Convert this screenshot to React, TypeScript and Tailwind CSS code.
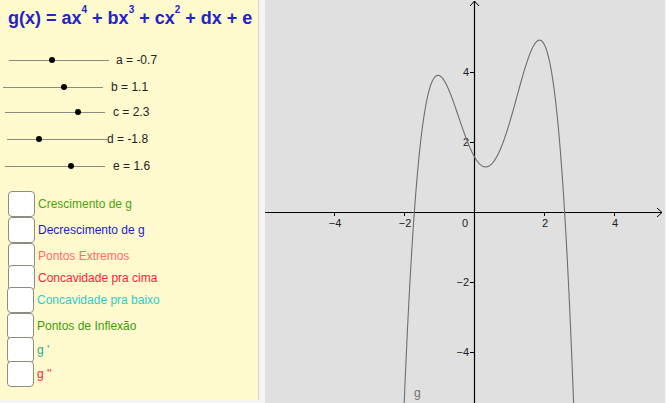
import React from 'react';

const sliders = [
  { name: 'a', value: -0.7, row: 'mt-[14px]', line: 'ml-[9px]', gap: 'ml-[7px]' },
  { name: 'b', value: 1.1, row: 'mt-[7px]', line: 'ml-[3px]', gap: 'ml-[8px]' },
  { name: 'c', value: 2.3, row: 'mt-[5px]', line: 'ml-[5px]', gap: 'ml-[8px]' },
  { name: 'd', value: -1.8, row: 'mt-[7px]', line: 'ml-[7px]', gap: 'ml-0' },
  { name: 'e', value: 1.6, row: 'mt-[7px]', line: 'ml-[5px]', gap: 'ml-[8px]' },
];

const boxes = [
  { label: 'Crescimento de g', color: 'text-[#4aa30f]', row: 'h-[26px]', box: 'ml-[8px]' },
  { label: 'Decrescimento de g', color: 'text-[#1a1acc]', row: 'h-[26px]', box: 'ml-[8px]' },
  { label: 'Pontos Extremos', color: 'text-[#ff6b6b]', row: 'h-[26px]', box: 'ml-[8px]' },
  { label: 'Concavidade pra cima', color: 'text-[#ff1a3c]', row: 'h-[18px]', box: 'ml-[8px]' },
  { label: 'Concavidade pra baixo', color: 'text-[#2ccbd0]', row: 'h-[26px]', box: 'ml-[7px]' },
  { label: 'Pontos de Inflexão', color: 'text-[#3d9a0c]', row: 'h-[25px]', box: 'ml-[7px]' },
  { label: "g '", color: 'text-[#2aa896]', row: 'h-[24px]', box: 'ml-[7px]' },
  { label: "g ''", color: 'text-[#ff2040]', row: 'h-[24px]', box: 'ml-[7px]' },
];

const g = (x: number) => -0.7 * x ** 4 + 1.1 * x ** 3 + 2.3 * x ** 2 - 1.8 * x + 1.6;

// graph coordinates: origin at (209, 212) inside the 400px wide canvas, 35px per unit
const OX = 209;
const OY = 212;
const U = 35;

function curvePath() {
  const pts: string[] = [];
  for (let x = -2.2; x <= 3.0; x += 0.01) {
    const px = OX + x * U;
    const py = OY - g(x) * U;
    pts.push(`${pts.length ? 'L' : 'M'}${px.toFixed(2)},${py.toFixed(2)}`);
  }
  return pts.join(' ');
}

function Graph() {
  const xs = [-4, -2, 2, 4];
  return (
    <svg width="400" height="403" className="block" style={{ fontFamily: '"Liberation Sans", Arial, sans-serif' }}>
      <rect width="400" height="403" fill="#e0e0e0" />
      {/* axes */}
      <line x1="0" y1={OY + 0.5} x2="397" y2={OY + 0.5} stroke="#000" strokeWidth="1.2" />
      <line x1={OX + 0.5} y1="1" x2={OX + 0.5} y2="403" stroke="#000" strokeWidth="1.2" />
      <polyline points={`392,${OY - 4} 397,${OY + 0.5} 392,${OY + 5}`} fill="none" stroke="#000" strokeWidth="1" />
      <polyline points={`${OX - 4},6 ${OX + 0.5},1 ${OX + 5},6`} fill="none" stroke="#000" strokeWidth="1" />
      {xs.map(v => (
        <g key={'x' + v}>
          <line x1={OX + v * U + 0.5} y1={OY} x2={OX + v * U + 0.5} y2={OY + 4} stroke="#000" strokeWidth="1" />
          <text x={OX + v * U + 1} y={OY + 15} fontSize="11" fill="#222" textAnchor="middle">
            {v < 0 ? '\u2212' + Math.abs(v) : v}
          </text>
        </g>
      ))}
      <text x={OX - 6} y={OY + 15} fontSize="11" fill="#222" textAnchor="end">0</text>
      {xs.map(v => (
        <g key={'y' + v}>
          <line x1={OX - 4} y1={OY - v * U + 0.5} x2={OX} y2={OY - v * U + 0.5} stroke="#000" strokeWidth="1" />
          <text x={OX - 5} y={OY - v * U + 4} fontSize="11" fill="#222" textAnchor="end">
            {v < 0 ? '\u2212' + Math.abs(v) : v}
          </text>
        </g>
      ))}
      <path d={curvePath()} fill="none" stroke="#6e6e6e" strokeWidth="1.1" />
      <text x="149" y="397" fontSize="12" fill="#707070">g</text>
    </svg>
  );
}

export default function App() {
  return (
    <div className="w-[666px] h-[403px] bg-[#f4f4f4] flex overflow-hidden font-['Liberation_Sans',Arial,sans-serif]">
      <div className="w-[259px] h-[400px] bg-[#fffacd] border-r border-[#d6d6c8] flex flex-col shrink-0">
        <div className="h-[36px] flex items-center pl-[8px] text-[#2323c8] font-bold text-[18px] whitespace-nowrap">
          g(x) = ax<sup className="text-[10px] -top-[8px]">4</sup>&nbsp;+ bx<sup className="text-[10px] -top-[8px]">3</sup>&nbsp;+ cx<sup className="text-[10px] -top-[8px]">2</sup>&nbsp;+ dx + e
        </div>
        {sliders.map(s => (
          <div key={s.name} className={`h-[20px] flex items-center ${s.row}`}>
            <div className={`relative w-[100px] h-px bg-[#8a8a80] ${s.line}`}>
              <div
                className="absolute top-[-2.5px] w-[6px] h-[6px] -ml-[3px] rounded-full bg-black"
                style={{ left: `${((s.value + 5) / 10) * 100}px` }}
              />
            </div>
            <span className={`text-[12px] text-[#222] ${s.gap}`}>
              {s.name} = {s.value}
            </span>
          </div>
        ))}
        <div className="mt-[15px] flex flex-col">
          {boxes.map(b => (
            <div key={b.label} className={`flex items-center ${b.row}`}>
              <div className={`w-[27px] h-[26px] shrink-0 bg-white border-[1.5px] border-[#8c8c82] rounded-[4px] ${b.box}`} />
              <span className={`ml-[3px] text-[12px] whitespace-nowrap ${b.color}`}>{b.label}</span>
            </div>
          ))}
        </div>
      </div>
      <div className="w-[6px] shrink-0" />
      <Graph />
    </div>
  );
}
